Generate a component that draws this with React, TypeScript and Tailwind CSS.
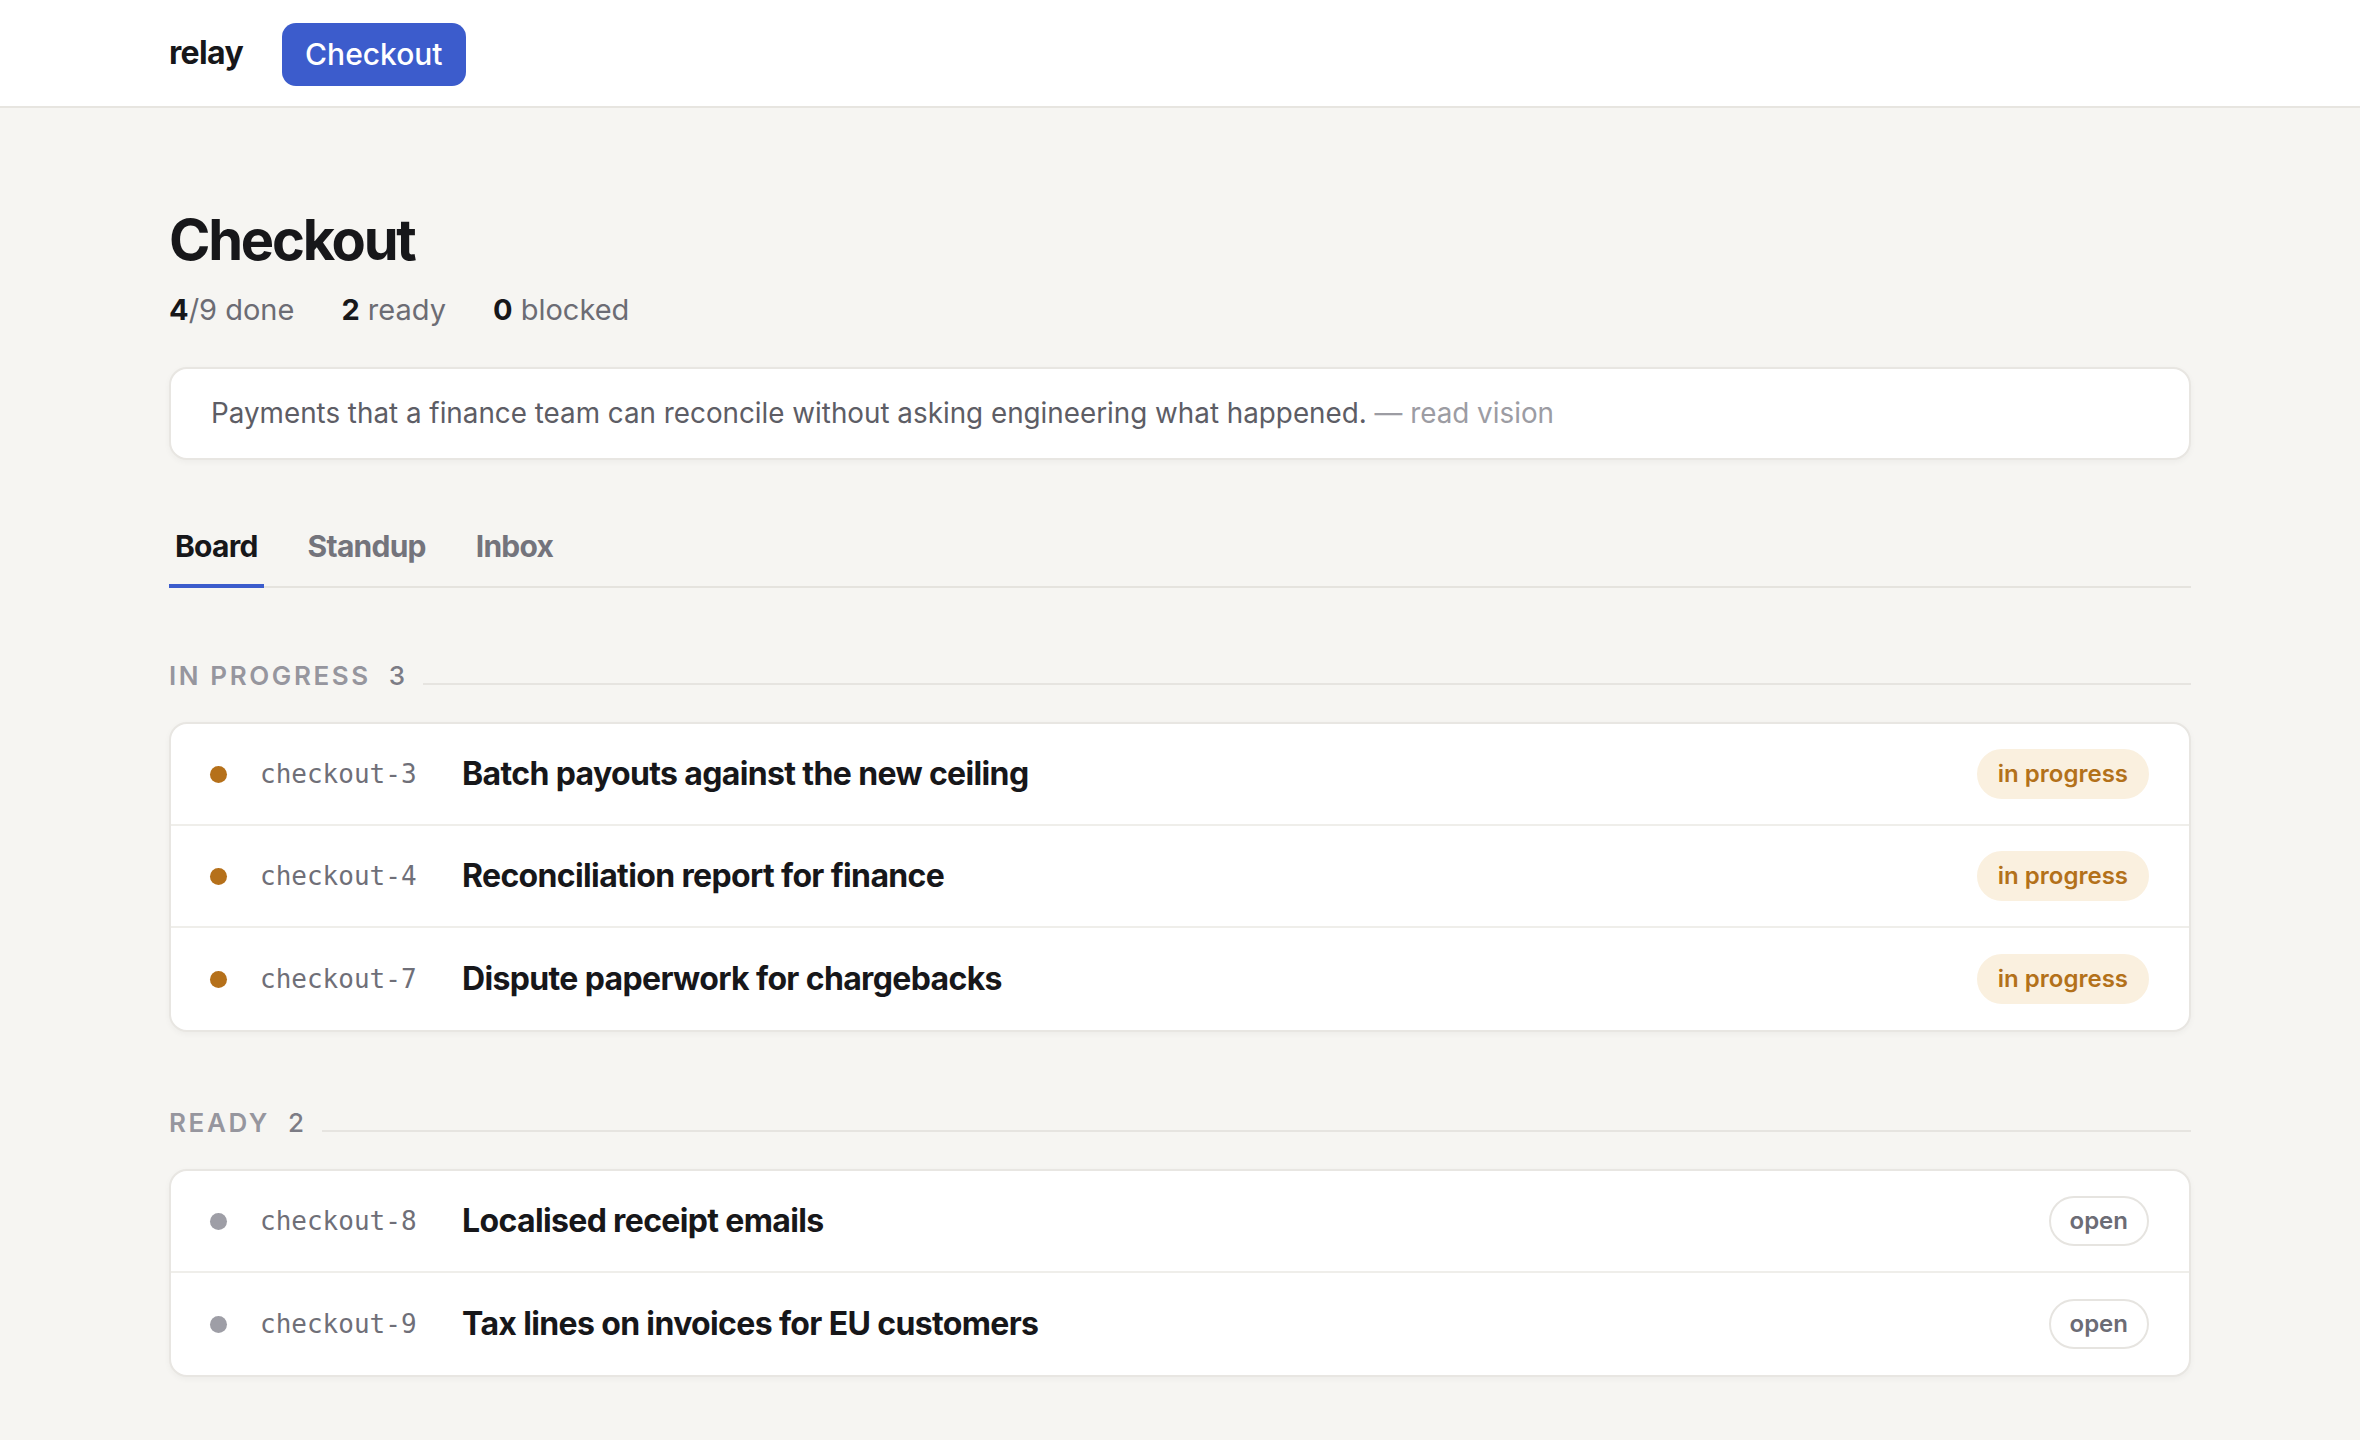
import React from "react";

type Status = "in progress" | "open";

interface Task {
  id: string;
  title: string;
  status: Status;
}

const inProgress: Task[] = [
  { id: "checkout-3", title: "Batch payouts against the new ceiling", status: "in progress" },
  { id: "checkout-4", title: "Reconciliation report for finance", status: "in progress" },
  { id: "checkout-7", title: "Dispute paperwork for chargebacks", status: "in progress" },
];

const ready: Task[] = [
  { id: "checkout-8", title: "Localised receipt emails", status: "open" },
  { id: "checkout-9", title: "Tax lines on invoices for EU customers", status: "open" },
];

function StatusPill({ status }: { status: Status }) {
  if (status === "in progress") {
    return (
      <span className="flex h-[50px] items-center rounded-full border-2 border-[#faf0df] bg-[#faf0df] px-[19px] text-[24px] font-semibold text-[#b3711a]">
        in progress
      </span>
    );
  }
  return (
    <span className="flex h-[50px] items-center rounded-full border-2 border-[#e6e4e0] bg-white px-[19px] text-[24px] font-semibold text-[#6c6c75]">
      open
    </span>
  );
}

function TaskRow({ task, last }: { task: Task; last: boolean }) {
  return (
    <div
      className={`flex h-[102px] items-center pl-[39px] pr-[40px] ${
        last ? "" : "border-b-2 border-[#efeeea]"
      }`}
    >
      <span
        className={`h-[17px] w-[17px] shrink-0 rounded-full ${
          task.status === "in progress" ? "bg-[#b5701a]" : "bg-[#9e9ea6]"
        }`}
      />
      <span className="ml-[33px] w-[202px] shrink-0 font-['DejaVu_Sans_Mono',monospace] text-[26px] text-[#6f6f78]">
        {task.id}
      </span>
      <span className="flex-1 text-[32px] font-bold tracking-[-0.02em] text-[#17171a]">
        {task.title}
      </span>
      <StatusPill status={task.status} />
    </div>
  );
}

function Section({ label, tasks, className }: { label: string; tasks: Task[]; className?: string }) {
  return (
    <section className={className}>
      <div className="flex items-center gap-[18px]">
        <span className="text-[26px] leading-[32px] font-semibold uppercase tracking-[0.1em] text-[#96969e]">
          {label}
        </span>
        <span className="text-[26px] leading-[32px] font-medium text-[#7c7c85]">{tasks.length}</span>
        <div className="mt-[15px] h-[2px] flex-1 bg-[#e6e4e0]" />
      </div>
      <div className="mt-[30px] overflow-hidden rounded-[18px] border-2 border-[#e8e6e2] bg-white shadow-[0_2px_6px_rgba(0,0,0,0.04)]">
        {tasks.map((t, i) => (
          <TaskRow key={t.id} task={t} last={i === tasks.length - 1} />
        ))}
      </div>
    </section>
  );
}

export default function App() {
  const tabs = ["Board", "Standup", "Inbox"];

  return (
    <div className="min-h-screen bg-[#f6f5f2] font-['Inter','Noto_Sans',sans-serif] text-[#17171a]">
      <header className="h-[108px] border-b-2 border-[#e7e5e0] bg-white">
        <div className="mx-auto flex h-full w-[2022px] items-center gap-[39px]">
          <span className="text-[32px] font-bold tracking-[-0.02em]">relay</span>
          <button className="mt-[2px] h-[63px] rounded-[14px] bg-[#3c5ccc] px-[23px] text-[30px] font-medium text-white">
            Checkout
          </button>
        </div>
      </header>

      <main className="mx-auto w-[2022px] pt-[99px] pb-[70px]">
        <h1 className="text-[56px] leading-[67px] font-bold tracking-[-0.04em]">Checkout</h1>

        <div className="mt-[15px] flex items-center gap-[47px] text-[29px] leading-[42px] text-[#6c6c74]">
          <span>
            <b className="font-bold text-[#17171a]">4</b>/9 done
          </span>
          <span>
            <b className="font-bold text-[#17171a]">2</b> ready
          </span>
          <span>
            <b className="font-bold text-[#17171a]">0</b> blocked
          </span>
        </div>

        <div className="mt-[36px] flex h-[93px] items-center rounded-[18px] border-2 border-[#e8e6e2] bg-white px-[40px] text-[27.8px] text-[#5d5d65] shadow-[0_2px_6px_rgba(0,0,0,0.04)]">
          <span>
            Payments that a finance team can reconcile without asking engineering what happened.{" "}
            <span className="text-[#9c9ca3]">— read vision</span>
          </span>
        </div>

        <nav className="mt-[66px] flex gap-[38px] border-b-2 border-[#e5e3de]">
          {tabs.map((t, i) => (
            <span
              key={t}
              className={`-mb-[2px] border-b-4 px-[6px] pb-[18px] text-[30px] leading-[40px] font-bold tracking-[-0.025em] ${
                i === 0 ? "border-[#3c5ccc] text-[#17171a]" : "border-transparent text-[#74747c]"
              }`}
            >
              {t}
            </span>
          ))}
        </nav>

        <Section className="mt-[72px]" label="In progress" tasks={inProgress} />
        <Section className="mt-[75px]" label="Ready" tasks={ready} />
      </main>
    </div>
  );
}
